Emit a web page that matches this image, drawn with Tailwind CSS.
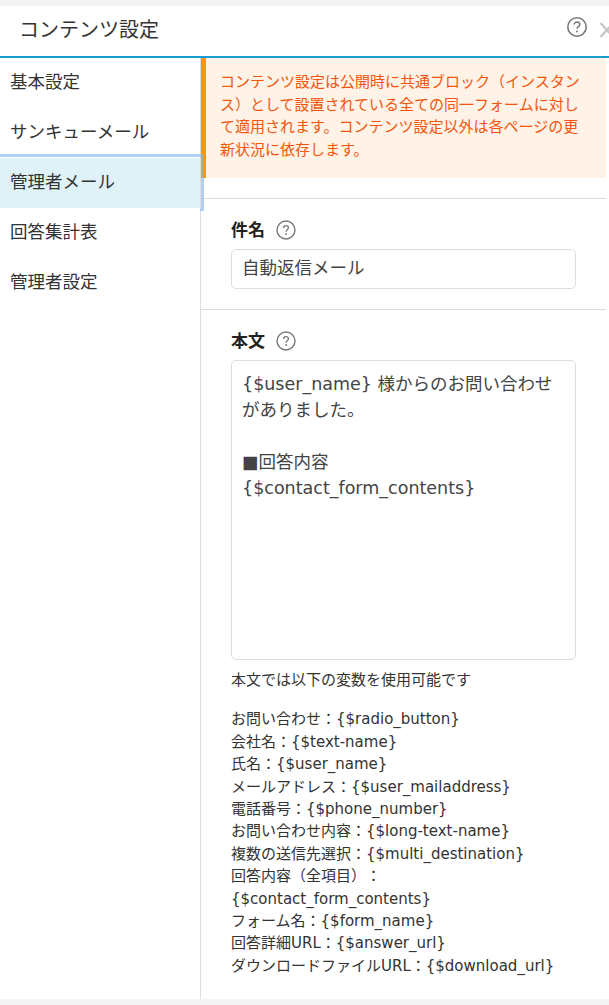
<!DOCTYPE html>
<html lang="ja">
<head>
    <meta charset="UTF-8">
    <title>コンテンツ設定</title>
    <script src="https://cdn.jsdelivr.net/npm/@tailwindcss/browser@4"></script>
</head>
<body class="bg-[#f4f4f4] overflow-hidden font-['DejaVu_Sans','Noto_Sans_CJK_JP',sans-serif] text-[#333] [text-spacing-trim:space-all]">
    <div class="w-[609px] h-[1005px] pt-[6px] pb-[6px] bg-[#f4f4f4] overflow-hidden">
        <div class="bg-white h-[993px] flex flex-col">
            <!-- Header -->
            <div class="h-[52px] shrink-0 border-b-2 border-[#1a9fca] flex items-center pl-[19px] pb-[3px] relative">
                <h1 class="text-[20px] font-normal text-[#333]">コンテンツ設定</h1>
                <svg class="absolute left-[566px] top-[10px]" width="22" height="22" viewBox="0 0 22 22" fill="none">
                    <circle cx="11" cy="11" r="9.2" stroke="#777" stroke-width="1.6"/>
                    <path d="M8.2 8.6c0-1.6 1.2-2.6 2.8-2.6s2.8 1 2.8 2.4c0 2.2-2.8 2.2-2.8 4.4" stroke="#777" stroke-width="1.5"/>
                    <circle cx="11" cy="15.4" r="1" fill="#777"/>
                </svg>
                <svg class="absolute left-[599px] top-[16px]" width="10" height="16" viewBox="0 0 10 16" fill="none">
                    <path d="M1.5 1l13 14M14.5 1L1.5 15" stroke="#c8c8c8" stroke-width="2.4"/>
                </svg>
            </div>
            <div class="flex flex-1 min-h-0">
                <!-- Sidebar -->
                <nav class="w-[201px] shrink-0 border-r border-[#ddd] text-[17.5px] text-[#333] relative z-10">
                    <div class="h-[50px] pl-[10px] pb-[1px] flex items-center">基本設定</div>
                    <div class="h-[50px] pl-[10px] pb-[1px] flex items-center">サンキューメール</div>
                    <div class="h-[50px] pl-[10px] pb-[1px] flex items-center bg-[#dff2f8] relative">
                        管理者メール
                        <!-- focus ring left over on the active tab -->
                        <span class="absolute left-0 top-[-4px] w-[204px] h-[3px] bg-[#7fb0e8]/60"></span>
                        <span class="absolute left-[201px] top-[-1px] w-[3px] h-[54px] bg-[#7fb0e8]/60"></span>
                        <span class="absolute left-[200px] top-[51px] w-[1px] h-[2px] bg-[#7fb0e8]/60"></span>
                    </div>
                    <div class="h-[50px] pl-[10px] pb-[1px] flex items-center">回答集計表</div>
                    <div class="h-[50px] pl-[10px] pb-[1px] flex items-center">管理者設定</div>
                </nav>
                <!-- Main -->
                <main class="w-[405px]">
                    <div class="h-[120px] bg-[#fff2e6] border-l-[5px] border-[#ff9800] pl-[14px] pr-[20px] pt-[13px] text-[15px] leading-[22.5px] text-[#f2560d]">
                        コンテンツ設定は公開時に共通ブロック（インスタンス）として設置されている全ての同一フォームに対して適用されます。コンテンツ設定以外は各ページの更新状況に依存します。
                    </div>
                    <section class="mt-5 border-t border-[#ddd] pt-[20px] pb-5 pl-[30px] pr-[30px] h-[111px]">
                        <div class="flex items-center gap-[11px] h-[22px] text-[17px] font-bold text-[#222]">
                            <span class="relative top-[1px]">件名</span>
                            <svg width="20" height="20" viewBox="0 0 20 20" fill="none">
                                <circle cx="10" cy="10" r="9" stroke="#777" stroke-width="1.4"/>
                                <path d="M7.6 8c0-1.4 1-2.3 2.4-2.3s2.4.9 2.4 2.1c0 1.9-2.4 1.9-2.4 3.9" stroke="#777" stroke-width="1.3"/>
                                <circle cx="10" cy="14" r=".9" fill="#777"/>
                            </svg>
                        </div>
                        <div class="mt-[8px] h-[40px] border border-[#ddd] rounded-[5px] pl-[10px] pb-[1px] flex items-center text-[17.5px] text-[#444]">自動返信メール</div>
                    </section>
                    <section class="border-t border-[#ddd] pt-[20px] pl-[30px] pr-[30px]">
                        <div class="flex items-center gap-[11px] h-[22px] text-[17px] font-bold text-[#222]">
                            <span class="relative top-[1px]">本文</span>
                            <svg width="20" height="20" viewBox="0 0 20 20" fill="none">
                                <circle cx="10" cy="10" r="9" stroke="#777" stroke-width="1.4"/>
                                <path d="M7.6 8c0-1.4 1-2.3 2.4-2.3s2.4.9 2.4 2.1c0 1.9-2.4 1.9-2.4 3.9" stroke="#777" stroke-width="1.3"/>
                                <circle cx="10" cy="14" r=".9" fill="#777"/>
                            </svg>
                        </div>
                        <div class="mt-[8px] h-[300px] border border-[#ddd] rounded-[5px] pl-[10px] pr-[20px] pt-[10px] text-[17.5px] leading-[26px] text-[#444]">
                            <p>{$user_name} 様からのお問い合わせがありました。</p>
                            <p class="mt-[26px]">■回答内容</p>
                            <p>{$contact_form_contents}</p>
                        </div>
                        <p class="mt-[9px] text-[15px] leading-[22.4px] text-[#333]">本文では以下の変数を使用可能です</p>
                        <div class="mt-[17px] text-[15px] leading-[22.4px] text-[#333]">
                            <p>お問い合わせ：{$radio_button}</p>
                            <p>会社名：{$text-name}</p>
                            <p>氏名：{$user_name}</p>
                            <p>メールアドレス：{$user_mailaddress}</p>
                            <p>電話番号：{$phone_number}</p>
                            <p>お問い合わせ内容：{$long-text-name}</p>
                            <p>複数の送信先選択：{$multi_destination}</p>
                            <p>回答内容（全項目）：</p>
                            <p>{$contact_form_contents}</p>
                            <p>フォーム名：{$form_name}</p>
                            <p>回答詳細URL：{$answer_url}</p>
                            <p>ダウンロードファイルURL：{$download_url}</p>
                        </div>
                    </section>
                </main>
            </div>
        </div>
    </div>
</body>
</html>
